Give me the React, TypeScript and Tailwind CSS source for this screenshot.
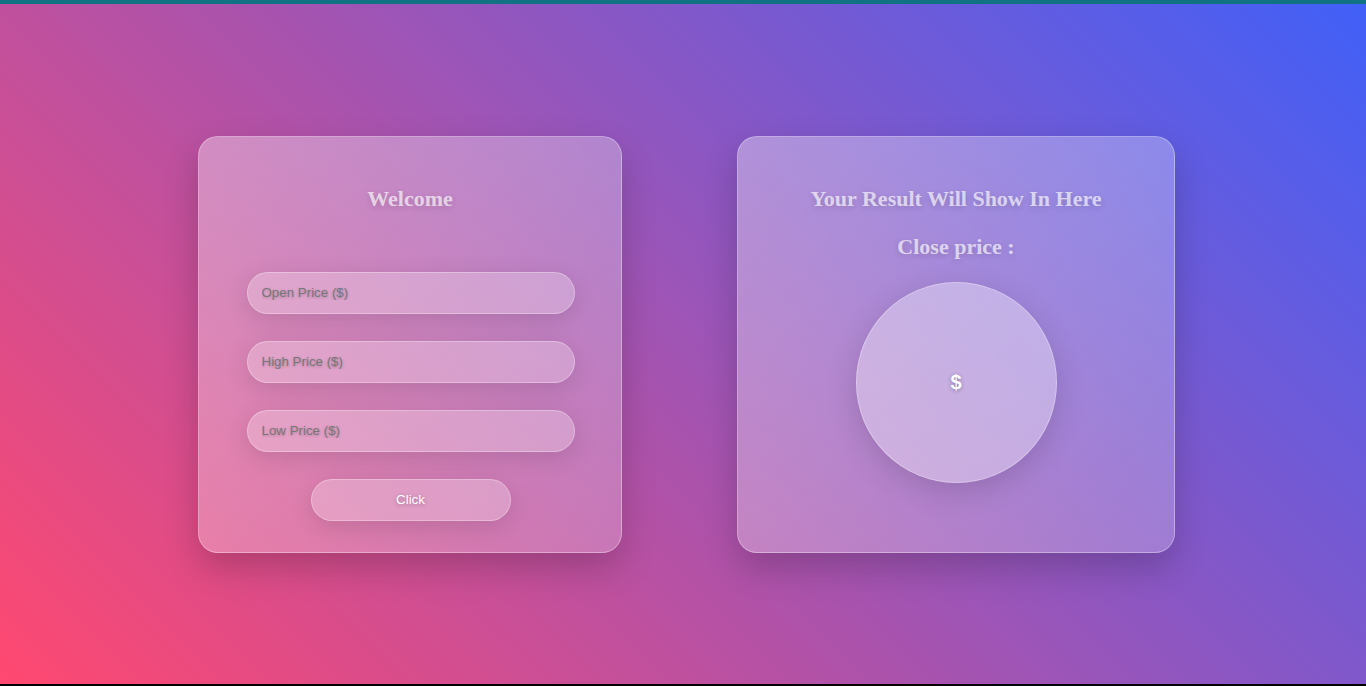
import React from "react";

export default function App() {
  const inputCls =
    "w-[328px] h-[42px] rounded-full bg-white/25 border border-white/30 px-[14px] font-['Liberation_Sans',Arial,sans-serif] text-[13.33px] text-[#555] placeholder:text-[#777] outline-none shadow-[0_6px_25px_rgba(0,0,0,0.12)] [text-shadow:0_1px_3px_rgba(0,0,0,0.25)]";
  const titleCls =
    "font-['Liberation_Serif','Times_New_Roman',serif] text-[22px] leading-[26px] font-bold text-white/65 [text-shadow:0_2px_6px_rgba(0,0,0,0.15)]";
  const cardCls =
    "h-[417px] rounded-[20px] border border-white/30 bg-[linear-gradient(135deg,rgba(255,255,255,0.35),rgba(255,255,255,0.22))] shadow-[0_15px_35px_rgba(0,0,0,0.2)] flex flex-col items-center pt-[49px]";
  return (
    <div className="w-full h-[686px] flex flex-col bg-black overflow-hidden">
      <div className="h-[4px] bg-[#117283] shrink-0" />
      <div className="h-[680px] shrink-0 bg-[linear-gradient(45deg,#ff4870,#4160f8)] flex items-center justify-center pl-[7px] gap-[115px]">
        {/* Left card */}
        <div className={`w-[424px] ${cardCls}`}>
          <h2 className={titleCls}>Welcome</h2>
          <div className="mt-[60px] flex flex-col items-center gap-[27px] pl-[1px]">
            <input className={inputCls} placeholder="Open Price ($)" />
            <input className={inputCls} placeholder="High Price ($)" />
            <input className={inputCls} placeholder="Low Price ($)" />
            <button className="w-[200px] h-[42px] rounded-full bg-white/25 border border-white/30 font-['Liberation_Sans',Arial,sans-serif] text-white text-[13.33px] shadow-[0_6px_25px_rgba(0,0,0,0.12)] [text-shadow:0_1px_4px_rgba(0,0,0,0.3)]">
              Click
            </button>
          </div>
        </div>

        {/* Right card */}
        <div className={`w-[438px] ${cardCls}`}>
          <h2 className={titleCls}>Your Result Will Show In Here</h2>
          <h2 className={`mt-[22px] ${titleCls}`}>Close price :</h2>
          <div className="mt-[22px] w-[201px] h-[201px] rounded-full bg-white/35 border border-white/30 shadow-[0_8px_30px_rgba(0,0,0,0.15)] flex items-center justify-center">
            <span className="font-['Liberation_Sans',Arial,sans-serif] text-white text-[20px] font-bold [text-shadow:0_1px_4px_rgba(0,0,0,0.3)]">
              $
            </span>
          </div>
        </div>
      </div>
    </div>
  );
}
